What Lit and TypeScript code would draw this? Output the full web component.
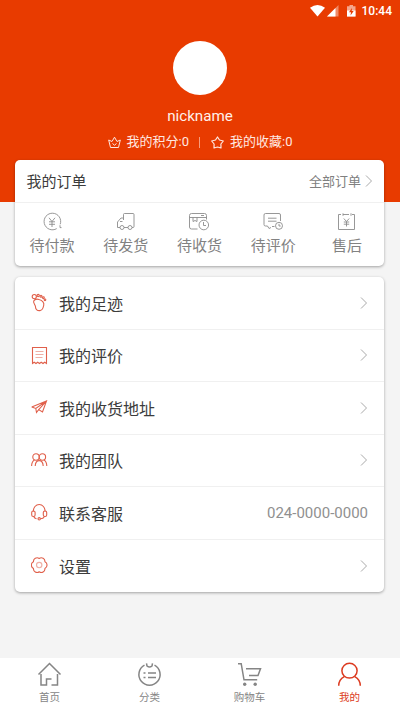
import { LitElement, html, css, svg } from "lit";
import { customElement } from "lit/decorators.js";

const icon = (cls: string, w: number, h: number, body: unknown) =>
  html`<svg class=${cls} width=${w} height=${h} viewBox="0 0 ${w} ${h}">${body}</svg>`;

const orders = [
  { label: "待付款", art: svg`<path d="M14.7 16.6A8.3 8.3 0 1 1 18.2 12.3M18 13.2v2.4h1.5M7 5.8l3 3.7 3-3.7M10 9.5v5.5M7 9.8h6M7 12.3h6"/>` },
  { label: "待发货", art: svg`<path d="M7.500 8V2.500Q7.500 1.500 8.500 1.500H17Q18 1.500 18 2.500V14.500Q18 15.500 17 15.500H16M7.500 6H5L1.500 10V15.500H4M8 15.500H12M4 9.500h2.500"/><circle cx="6" cy="15.500" r="2"/><circle cx="14" cy="15.500" r="2"/>` },
  { label: "待收货", art: svg`<path d="M8.500 17H2.500Q.5 17 .5 15V3.500Q.5 1.500 2.500 1.500H15.500Q17.500 1.500 17.500 3.500V7.500M.5 5.500H17.500M4 5.500V9.500L6 8.500L8 9.500V5.500M12 3.500h3"/><circle cx="14.800" cy="13" r="4.800"/><path d="M14.500 10v3.500h2.500"/>` },
  { label: "待评价", art: svg`<path d="M17.500 9V3Q17.500 1.500 16 1.500H2.500Q1 1.500 1 3V12.500Q1 14 2.500 14H4.500L6 16.500L8 15.500M9 14.500H11.500M5 6.200H13.500M5 9.200H13.500"/><circle cx="16" cy="13.800" r="3.500"/><path d="M16 11.800v2.200h1.700"/>` },
  { label: "售后", art: svg`<path d="M4 2.500H1.500V17.500H17.500V2.500H15M6 2.500h6M6 1.300v2.500M14 1.300v2.500M6.800 6.500l2.700 3 2.700-3M9.500 9.500v5M6.800 10h5.400M6.800 12.200h5.400"/>` },
];

const rows = [
  { label: "我的足迹", art: svg`<circle cx="3.300" cy="3.600" r="2.100"/><circle cx="7.200" cy="2.500" r="1.100"/><circle cx="10" cy="3.200" r="1"/><circle cx="12.400" cy="4.700" r=".9"/><circle cx="14" cy="6.800" r=".8"/><path d="M2.700 8C3.700 6.200 5.700 5.800 8 6.500C11.500 7.400 13.500 9.800 12.700 12.300C12.300 14.300 12 17.200 8.900 17.600C5.800 17.800 4.400 16 4.500 13.800C4.600 12 2 10.300 2.700 8Z"/>` },
  { label: "我的评价", art: svg`<path d="M1.500 1.500H15.500V17.500L13.700 16.200L12 17.500L10.200 16.200L8.500 17.500L6.700 16.200L5 17.500L3.200 16.200L1.500 17.500Z"/><path class="faint" d="M4.500 5.500h8M4.500 8.500h8M4.500 11.500h7"/>` },
  { label: "我的收货地址", art: svg`<path d="M.7 9L15.500 3L11.500 14L7.700 11.700L15.500 3L4.800 10.500L.7 9M4.800 10.500L5.500 14.500L7.700 11.700"/>` },
  { label: "我的团队", art: svg`<circle cx="5" cy="6" r="3.200"/><circle cx="11.400" cy="6" r="3.200"/><path d="M.6 15C.7 11.500 2 9.800 3.500 9M4.200 15C4.400 11.500 6 9.600 8.200 9.600C10.500 9.600 12 11.500 12.200 15M12.900 9C14.500 9.800 15.700 11.500 15.800 15"/>` },
  { label: "联系客服", note: "024-0000-0000", art: svg`<path d="M2.300 8.500C2.300 4.500 4.800 1.500 8.200 1.500C11.600 1.500 14.100 4.500 14.100 8.500M13.500 13.500Q12.300 15.800 9.500 15.800M2.700 13.500Q3.500 15.300 5.500 15.800"/><rect x=".7" y="8" width="3.400" height="5.500" rx="1.600"/><rect x="12.300" y="8" width="3.400" height="5.500" rx="1.600"/><circle cx="8.200" cy="15.800" r="1.200"/>` },
  { label: "设置", art: svg`<path stroke-linejoin="round" d="M8.200 2.500A3.600 3.600 0 0 1 13.900 5.800A3.600 3.600 0 0 1 13.900 12.400A3.600 3.600 0 0 1 8.200 15.700A3.600 3.600 0 0 1 2.500 12.400A3.600 3.600 0 0 1 2.500 5.800A3.600 3.600 0 0 1 8.200 2.500Z"/><circle class="faint" cx="8.200" cy="9.100" r="2.700"/>` },
];

const tabs = [
  { label: "首页", art: svg`<path d="M1.500 12.500L12.500 1.500L23.500 12.500M4 12V23H9.500V17H14.500M14.500 23H20.500V12"/>` },
  { label: "分类", art: svg`<path d="M7.500 3.200A10.600 10.600 0 1 0 17.500 3.200M9.500 1.300L10 4Q12.500 6 15 4L15.500 1.300M11 11h8M11 15.500h8M6.500 11h2M6.500 15.500h2"/>` },
  { label: "购物车", art: svg`<path d="M1 1.700H4.200L7 17.800H20.200M9 6.800H23.500L21 13.500H12"/><circle class="dot" cx="7.700" cy="22.300" r="1.700"/><circle class="dot" cx="18.200" cy="22.300" r="1.700"/>` },
  { label: "我的", on: true, art: svg`<ellipse cx="12.500" cy="8.700" rx="7.600" ry="7.400"/><path d="M1.700 23.800C1.700 18.800 4.400 16.200 7.300 14.700M17.700 14.700C20.600 16.200 23.300 18.800 23.300 23.800"/>` },
];

const chevron = icon("chevron", 8, 14, svg`<path d="M1 1.500L6.500 7L1 12.500"/>`);

@customElement("app-root")
export class AppRoot extends LitElement {
  static styles = css`
    :host {
      display: flex;
      flex-direction: column;
      height: 711px;
      background: #f4f4f4;
      color: #3c3c3c;
      font-family: Roboto, "Noto Sans CJK SC", sans-serif;
    }
    svg { display: block; fill: none; stroke: currentColor; stroke-width: 1; flex: none; }
    .header {
      height: 202px;
      flex: none;
      background: #e83b00;
      color: #fff;
      display: flex;
      flex-direction: column;
      align-items: center;
    }
    .status {
      align-self: stretch;
      height: 22px;
      box-sizing: border-box;
      padding-right: 8px;
      display: flex;
      justify-content: flex-end;
      align-items: center;
      font-size: 12px;
      font-weight: 500;
    }
    .status svg { margin-right: 6px; fill: #fff; stroke: none; }
    .avatar { width: 54px; height: 54px; margin-top: 19px; border-radius: 50%; background: #fff; }
    .name { margin-top: 11px; font-size: 15.200px; line-height: 21px; color: #fff0ea; }
    .stats {
      margin-top: 5px;
      display: flex;
      align-items: center;
      font-size: 13px;
      line-height: 20px;
      color: #ffe8e0;
    }
    .stats svg { margin-right: 6px; }
    .bar { width: 1px; height: 11px; margin: 0 11px 0 10px; background: #f79b7c; }
    .card {
      margin: 0 16px 0 15px;
      flex: none;
      border-radius: 5px;
      background: #fff;
      box-shadow: 0 1px 3px rgba(0, 0, 0, 0.34);
    }
    .orders { margin-top: -42px; height: 106px; }
    .head {
      height: 43px;
      box-sizing: border-box;
      border-bottom: 1px solid #f0f0f0;
      padding: 0 11px 1px 11.500px;
      display: flex;
      align-items: center;
      font-size: 15px;
    }
    .all { margin-left: auto; margin-right: 4px; font-size: 13px; color: #808080; }
    .grid { display: grid; grid-template-columns: repeat(5, 1fr); }
    .order {
      display: flex;
      flex-direction: column;
      align-items: center;
      padding-top: 9px;
      font-size: 15px;
      line-height: 22px;
      color: #828282;
    }
    .order svg { margin-bottom: 3px; stroke: #8c8c8c; stroke-width: 0.9; }
    .menu { margin-top: 11px; height: 315px; display: grid; grid-template-rows: repeat(6, 1fr); }
    .row {
      display: flex;
      align-items: center;
      padding: 0 16px;
      border-bottom: 1px solid #f0f0f0;
      font-size: 16px;
    }
    .row:last-child { border-bottom: 0; }
    .mark { margin-right: 11px; color: #e0604b; stroke-width: 1.100; }
    .faint { opacity: 0.5; }
    .note { margin-left: auto; font-size: 15px; color: #909090; }
    .chevron { color: #aaa; }
    .row .chevron { margin-left: auto; }
    .tabs {
      margin-top: auto;
      height: 53px;
      background: #fff;
      display: grid;
      grid-template-columns: repeat(4, 1fr);
    }
    .tab {
      display: flex;
      flex-direction: column;
      align-items: center;
      padding-top: 4px;
      font-size: 10.500px;
      line-height: 16px;
      color: #858585;
    }
    .tab svg { margin: 0 0 3px -1px; stroke-width: 1.500; }
    .tab span { margin-left: -1px; }
    .tab.on { color: #dc3b20; }
    .dot { fill: currentColor; stroke: none; }
  `;

  render() {
    return html`
      <div class="header">
        <div class="status">
          ${icon("", 31, 14, svg`<path d="M0 3.700Q7.500 -1.500 15 3.700L7.500 12.500Z"/><path d="M17 12.500L28.500 1V12.500Z" opacity=".4"/><path d="M17 12.500L25.500 4V12.500Z"/>`)}
          ${icon("", 9, 14, svg`<path d="M2.500 1H6V2.200H8.500V12.500H0V2.200H2.500Z" opacity=".55"/><path d="M0 6.500H8.500V12.500H0Z"/><path d="M5 4L2 8.300H4L3.500 11.500L6.700 7H4.700Z" fill="#e83b00"/>`)}
          <span>10:44</span>
        </div>
        <div class="avatar"></div>
        <div class="name">nickname</div>
        <div class="stats">
          ${icon("", 13, 13, svg`<path d="M.7 4L2.500 11.500H10.500L12.300 4L9 5.500L6.500 1.200L4 5.500ZM4.500 7.500L6.500 9.200L8.500 7.500"/>`)}
          <span>我的积分:0</span><i class="bar"></i>
          ${icon("", 13, 13, svg`<path d="M6.500 1L8.500 4L12.300 5L9.900 8L10 12L6.500 11L3 12L3.100 8L.7 5L4.500 4Z" stroke-linejoin="round" stroke-width="1.200"/>`)}
          <span>我的收藏:0</span>
        </div>
      </div>
      <section class="card orders">
        <div class="head"><span>我的订单</span><span class="all">全部订单</span>${chevron}</div>
        <div class="grid">
          ${orders.map((o) => html`<div class="order">${icon("", 20, 20, o.art)}<span>${o.label}</span></div>`)}
        </div>
      </section>
      <section class="card menu">
        ${rows.map((r) => html`<div class="row">
          ${icon("mark", 17, 19, r.art)}<span>${r.label}</span>
          ${r.note ? html`<span class="note">${r.note}</span>` : chevron}
        </div>`)}
      </section>
      <nav class="tabs">
        ${tabs.map((t) => html`<div class="tab ${t.on ? "on" : ""}">${icon("", 25, 25, t.art)}<span>${t.label}</span></div>`)}
      </nav>
    `;
  }
}
